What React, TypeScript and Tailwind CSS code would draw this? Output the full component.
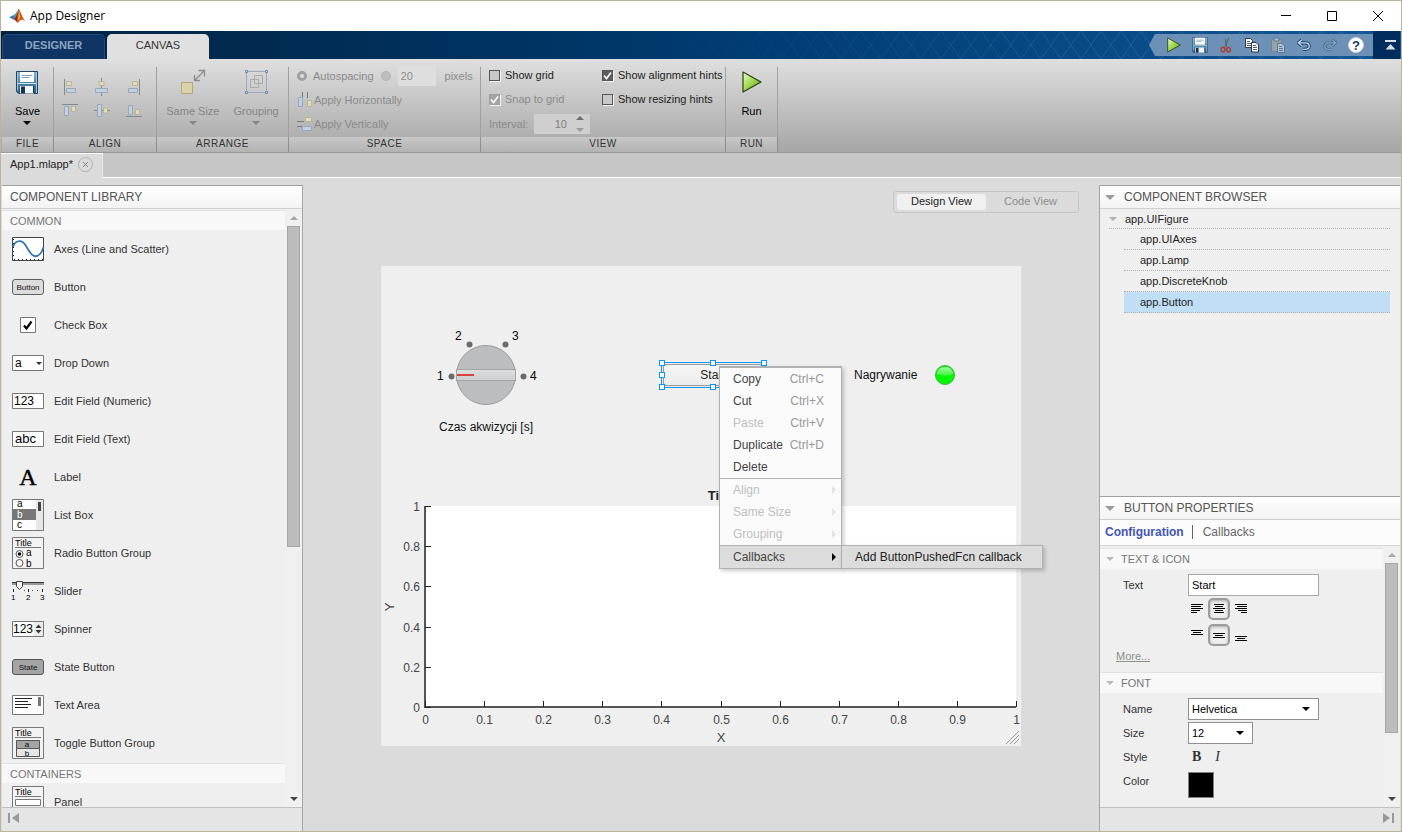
import type { ReactNode } from "react";
import { useState } from "react";
import clsx from "clsx";

type IconProps = { className?: string };

const SANS = "font-['Liberation_Sans',Arial,sans-serif]";

/* ---------- shared bits ---------- */

function Triangle({ dir = "down", className }: { dir?: "down" | "up" | "right"; className?: string }) {
  const points = {
    down: "0,0 10,0 5,5",
    up: "0,5 10,5 5,0",
    right: "0,0 5,5 0,10",
  }[dir];
  return (
    <svg viewBox={dir === "right" ? "0 0 5 10" : "0 0 10 5"} className={clsx("shrink-0", className)} aria-hidden="true">
      <polygon points={points} fill="currentColor" />
    </svg>
  );
}

function MatlabLogo() {
  return (
    <svg viewBox="0 0 16 16" className="h-4 w-4" aria-hidden="true">
      <path d="M0 9.2 4.5 7 6.6 8.7 4.2 11.6z" fill="#3f7fb5" />
      <path d="M4.5 7C6.5 6.6 8 3 9.8 1L6.9 8.7z" fill="#2aa5b8" />
      <path d="M4.2 11.6 6.6 8.7C8 6.5 9 3 9.8 1c.8 1 1.2 3 1.8 5.5L8.2 14.5C7 13.4 6 11 4.2 11.6z" fill="#8f2a1e" />
      <path d="M9.8 1C11.6 3.4 13 9 16 12.8c-2-1-3.3-1.6-4.6-.6-1.2.8-1.8 2-3.2 2.9C8.6 12 8 6 9.8 1z" fill="#d4551c" />
      <path d="M9.8 1c.2 4-.2 8-1.2 12 1-1 2-2.6 2.6-4z" fill="#f7b64a" />
    </svg>
  );
}

function ScrollColumn({ children }: { children: ReactNode }) {
  return (
    <div className="flex w-[17px] shrink-0 flex-col items-center bg-[#f0f0f0] pb-[6px]" aria-hidden="true">
      <div className="flex h-[17px] shrink-0 items-center">
        <Triangle dir="up" className="h-1 w-2 text-[#a6a6a6]" />
      </div>
      {children}
      <div className="flex-1" />
      <Triangle className="h-1 w-2 text-[#444]" />
    </div>
  );
}

/* ---------- title bar and tab header ---------- */

function TitleBar() {
  return (
    <div className="flex h-[30px] shrink-0 items-center bg-white pl-2">
      <MatlabLogo />
      <h1 className="ml-[5px] flex-1 font-['Open_Sans','Noto_Sans',sans-serif] text-xs text-black">App Designer</h1>
      <button type="button" aria-label="Minimize" className="flex h-full w-[46px] items-center justify-center">
        <svg viewBox="0 0 10 10" className="h-[10px] w-[10px]">
          <path d="M0 4.5h10" stroke="#000" />
        </svg>
      </button>
      <button type="button" aria-label="Maximize" className="flex h-full w-[46px] items-center justify-center">
        <svg viewBox="0 0 10 10" className="h-[10px] w-[10px]">
          <path d="M.5.5h9v9h-9z" stroke="#000" fill="none" />
        </svg>
      </button>
      <button type="button" aria-label="Close" className="flex h-full w-[46px] items-center justify-center">
        <svg viewBox="0 0 10 10" className="h-[10px] w-[10px]">
          <path d="M0 0 10 10M10 0 0 10" stroke="#000" />
        </svg>
      </button>
    </div>
  );
}

function RunIcon({ className }: IconProps) {
  return (
    <svg viewBox="0 0 20 22" className={className} aria-hidden="true">
      <defs>
        <linearGradient id="runFill" x1="0" y1="0" x2="1" y2="1">
          <stop offset="0" stopColor="#f0fbd8" />
          <stop offset=".45" stopColor="#a5db55" />
          <stop offset="1" stopColor="#5c9c1c" />
        </linearGradient>
      </defs>
      <path d="M1 1 19 11 1 21z" fill="url(#runFill)" stroke="#26420e" strokeWidth="1.2" strokeLinejoin="round" />
    </svg>
  );
}

function FloppyIcon({ className }: IconProps) {
  return (
    <svg viewBox="0 0 22 23" className={className} aria-hidden="true">
      <defs>
        <linearGradient id="floppyBody" x1="0" y1="0" x2="0" y2="1">
          <stop offset="0" stopColor="#7fb0cf" />
          <stop offset="1" stopColor="#245b82" />
        </linearGradient>
      </defs>
      <path d="M.5.5h21v22H2.5l-2-2z" fill="url(#floppyBody)" stroke="#1d4766" />
      <path d="M1.5 1v18.5M20.5 1v21" stroke="#9cc8e2" />
      <path d="M4 1h14v10H4z" fill="#fff" />
      <path d="M5.5 4.5h11M5.5 6.5h8" stroke="#7a9fb8" />
      <path d="M2 12.5h18" stroke="#cfe4f0" />
      <path d="M4 15h14v7.500H4z" fill="#f1f4f6" />
      <path d="M5 15.5h4v7H5z" fill="#17344b" />
      <path d="M17.5 15v7" stroke="#17344b" />
    </svg>
  );
}

function CutIcon({ className }: IconProps) {
  return (
    <svg viewBox="0 0 16 16" className={className} fill="none" aria-hidden="true">
      <path d="M11 .5 7 9.5M7.5 2l1 8" stroke="#5d6a78" strokeWidth="1.4" />
      <ellipse cx="5" cy="12.5" rx="1.8" ry="2.4" stroke="#b03a2c" strokeWidth="1.4" />
      <ellipse cx="10.5" cy="12.7" rx="1.8" ry="2.3" stroke="#b03a2c" strokeWidth="1.4" />
    </svg>
  );
}

function CopyIcon({ className }: IconProps) {
  return (
    <svg viewBox="0 0 16 16" className={className} aria-hidden="true">
      <path d="M1.5 1.5h5l2 2v7h-7z" fill="#fff" stroke="#26394d" />
      <path d="M3 4.5h3M3 6.5h4M3 8.5h4" stroke="#4c6177" />
      <path d="M7.5 5.5h4.5l2.5 2.5v7h-7z" fill="#fff" stroke="#26394d" />
      <path d="M9 8.5h3M9 10.5h4M9 12.5h4" stroke="#4c6177" />
    </svg>
  );
}

function PasteIcon({ className }: IconProps) {
  return (
    <svg viewBox="0 0 16 16" className={clsx("opacity-60", className)} aria-hidden="true">
      <path d="M1.5 2.5h10v12h-10z" fill="#b3b29a" stroke="#6f7d88" />
      <path d="M4 1h5v3H4z" fill="#d5dbe0" stroke="#566878" />
      <path d="M7.5 6.5h4.5l2.5 2.5v6.5h-7z" fill="#dfe7ee" stroke="#4f6a84" />
      <path d="M9 9.5h3M9 11.5h4M9 13.5h4" stroke="#4f6a84" />
    </svg>
  );
}

function UndoIcon({ className }: IconProps) {
  return (
    <svg viewBox="0 0 16 16" className={className} fill="none" strokeLinejoin="round" aria-hidden="true">
      <path d="M5.5 2 1.5 5.5l4 3.5M2 5.5h7.5c6 0 6 7.5 0 7.5H7" stroke="#1b3f66" strokeWidth="3.6" />
      <path d="M5.5 2 1.5 5.5l4 3.5M2 5.5h7.5c6 0 6 7.5 0 7.5H7" stroke="#c4dcf2" strokeWidth="1.5" />
    </svg>
  );
}

function RedoIcon({ className }: IconProps) {
  return (
    <svg viewBox="0 0 16 16" className={className} fill="none" strokeLinejoin="round" aria-hidden="true">
      <path d="M10.5 2l4 3.5-4 3.5M14 5.5H6.5c-6 0-6 7.5 0 7.5H9" stroke="#456789" strokeWidth="3.2" />
      <path d="M10.5 2l4 3.5-4 3.5M14 5.5H6.5c-6 0-6 7.5 0 7.5H9" stroke="#86a5c4" strokeWidth="1.4" />
    </svg>
  );
}

function HelpIcon({ className }: IconProps) {
  return (
    <svg viewBox="0 0 16 16" className={className} aria-hidden="true">
      <circle cx="8" cy="8" r="7.5" fill="#fff" stroke="#c9d3dd" />
      <text x="8" y="12.5" textAnchor="middle" fontSize="13" fontWeight="700" fill="#1d3a5c" fontFamily="Liberation Sans">
        ?
      </text>
    </svg>
  );
}

const quickActions = [
  { name: "Run", icon: <RunIcon className="h-4 w-[14px]" /> },
  { name: "Save", icon: <FloppyIcon className="h-4 w-4" /> },
  { name: "Cut", icon: <CutIcon className="h-4 w-4" /> },
  { name: "Copy", icon: <CopyIcon className="h-4 w-4" /> },
  { name: "Paste", icon: <PasteIcon className="h-4 w-4" /> },
  { name: "Undo", icon: <UndoIcon className="h-[14px] w-[14px]" /> },
  { name: "Redo", icon: <RedoIcon className="h-[14px] w-[14px]" /> },
  { name: "Help", icon: <HelpIcon className="h-4 w-4" /> },
];

function HeaderTabs() {
  return (
    <div className="relative flex h-7 shrink-0 items-end bg-linear-to-r from-[#00223f] via-[#003a70] via-50% to-[#125796] px-px">
      <svg className="absolute inset-y-0 right-0 h-full w-3/5" aria-hidden="true">
        <defs>
          <pattern id="mesh" width="20" height="28" patternUnits="userSpaceOnUse">
            <path d="M0 0 20 28M20 0 0 28" stroke="#4a8fc4" strokeOpacity=".3" fill="none" />
          </pattern>
          <linearGradient id="meshFade">
            <stop offset=".1" stopColor="#000" />
            <stop offset=".7" stopColor="#fff" />
          </linearGradient>
          <mask id="meshMask">
            <rect width="100%" height="100%" fill="url(#meshFade)" />
          </mask>
        </defs>
        <rect width="100%" height="100%" fill="url(#mesh)" mask="url(#meshMask)" />
      </svg>
      <button
        type="button"
        className="relative h-[25px] w-[103px] rounded-t-[5px] border border-b-0 border-[#1c4a80] bg-[#0e3564] pb-[3px] text-[11px] font-bold text-[#8fa5c0]"
      >
        DESIGNER
      </button>
      <button
        type="button"
        className="relative ml-[2px] h-[25px] w-[102px] rounded-t-[5px] bg-[#e0e0e0] pb-[3px] text-[11px] text-[#333]"
      >
        CANVAS
      </button>
      <div className="flex-1" />
      <div className="relative flex h-full items-center">
        <svg viewBox="0 0 8 22" className="h-[22px] w-2" aria-hidden="true">
          <path d="M8 0H6L0 11l6 11h2z" fill="#6d90b6" />
        </svg>
        <div className="flex h-[22px] items-center bg-[#6d90b6] px-1">
          {quickActions.map((action) => (
            <button key={action.name} type="button" aria-label={action.name} className="flex w-[26px] justify-center">
              {action.icon}
            </button>
          ))}
        </div>
        <button type="button" aria-label="Minimize toolstrip" className="flex h-full w-[27px] items-center justify-center bg-[#002d5c] pl-2">
          <svg viewBox="0 0 11 10" className="h-[10px] w-[11px]">
            <path d="M0 .5h11M0 1.5h11" stroke="#d5e0ea" />
            <path d="M5.5 4 10.5 9.5H.5z" fill="#d5e0ea" />
          </svg>
        </button>
      </div>
    </div>
  );
}

/* ---------- ribbon ---------- */

function RibbonSection({ title, className, children }: { title: string; className?: string; children: ReactNode }) {
  return (
    <section className={clsx("flex flex-col", className)}>
      <div className="flex min-h-0 flex-1">
        <div className="flex min-w-0 flex-1">{children}</div>
        <div className="mt-2 w-px bg-[#a0a0a0]" />
      </div>
      <h2 className="flex h-[15px] items-center justify-center border-r border-[#8e8e8e] bg-linear-to-b from-[#c8c8c8] to-[#b2b2b2] pb-px text-[10px] leading-[14px] tracking-wider text-[#333]">
        {title}
      </h2>
    </section>
  );
}

function RibbonButton({
  label,
  icon,
  disabled,
  arrow,
}: {
  label: string;
  icon: ReactNode;
  disabled?: boolean;
  arrow?: boolean;
}) {
  return (
    <button
      type="button"
      disabled={disabled}
      className={clsx("flex flex-col items-center px-1 pt-[10px] text-[11px]", disabled ? "text-[#858585]" : "text-black")}
    >
      <span className="flex h-[26px] items-center justify-center">{icon}</span>
      <span className="mt-2 leading-4">{label}</span>
      {arrow && <Triangle className="mt-[2px] h-1 w-2" />}
    </button>
  );
}

const B = "#94a8bf";
const Y = "#bcb48e";

const alignIcons = [
  {
    name: "Align left",
    art: (
      <>
        <path d="M2.5 1v16" stroke="#7f8a90" />
        <path d="M4.5 3.5h5v4h-5z" stroke={Y} fill="#e0dcc4" />
        <path d="M4.5 10.5h9v4h-9z" stroke={B} fill="#c6d0dc" />
      </>
    ),
  },
  {
    name: "Align center",
    art: (
      <>
        <path d="M7.5 0v18" stroke="#7f8a90" />
        <path d="M5 3.5h5v4H5z" stroke={Y} fill="#e0dcc4" />
        <path d="M1.5 10.5h12v4h-12z" stroke={B} fill="#c6d0dc" />
      </>
    ),
  },
  {
    name: "Align right",
    art: (
      <>
        <path d="M13.5 1v16" stroke="#7f8a90" />
        <path d="M6.5 3.5h5v4h-5z" stroke={Y} fill="#e0dcc4" />
        <path d="M2.5 10.5h9v4h-9z" stroke={B} fill="#c6d0dc" />
      </>
    ),
  },
  {
    name: "Align top",
    art: (
      <>
        <path d="M0 2.5h16" stroke="#7f8a90" />
        <path d="M2.5 4.5h4v9h-4z" stroke={B} fill="#c6d0dc" />
        <path d="M9.5 4.5h4v5h-4z" stroke={Y} fill="#e0dcc4" />
      </>
    ),
  },
  {
    name: "Align middle",
    art: (
      <>
        <path d="M0 8.5h16" stroke="#7f8a90" />
        <path d="M3.5 2.5h4v12h-4z" stroke={B} fill="#c6d0dc" />
        <path d="M9.5 6h4v5h-4z" stroke={Y} fill="#e0dcc4" />
      </>
    ),
  },
  {
    name: "Align bottom",
    art: (
      <>
        <path d="M0 14.5h16" stroke="#7f8a90" />
        <path d="M2.5 3.5h4v9h-4z" stroke={B} fill="#c6d0dc" />
        <path d="M9.5 7.5h4v5h-4z" stroke={Y} fill="#e0dcc4" />
      </>
    ),
  },
];

function CheckField({ id, label, checked, disabled }: { id: string; label: string; checked?: boolean; disabled?: boolean }) {
  return (
    <div className={clsx("flex h-6 items-center gap-[5px]", disabled ? "text-[#8a8a8a]" : "text-[#1c1c1c]")}>
      <span className="relative flex">
        <input
          id={id}
          type="checkbox"
          defaultChecked={checked}
          disabled={disabled}
          className="peer h-[11px] w-[11px] appearance-none border border-[#555] bg-[#c9c9c9] shadow-[1px_1px_0_#f4f4f4] checked:bg-[#5c5c5c] disabled:border-[#a0a0a0] disabled:bg-[#a4a4a4]"
        />
        <svg viewBox="0 0 11 11" className="pointer-events-none absolute inset-0 hidden h-[11px] w-[11px] peer-checked:block">
          <path d="M2 5.5 4.5 8.5 9 2.5" stroke="#f4f4f4" strokeWidth="1.8" fill="none" />
        </svg>
      </span>
      <label htmlFor={id}>{label}</label>
    </div>
  );
}

function Ribbon() {
  return (
    <div className="flex h-[94px] shrink-0 border-b border-[#9a9a9a] bg-linear-to-b from-[#dfdfdf] to-[#a6a6a6] pl-px text-[11px]">
      <RibbonSection title="FILE" className="w-[52px]">
        <div className="flex flex-1 justify-center">
          <RibbonButton label="Save" icon={<FloppyIcon className="h-[23px] w-[22px]" />} arrow />
        </div>
      </RibbonSection>

      <RibbonSection title="ALIGN" className="w-[103px]">
        <div className="mt-[19px] grid flex-1 auto-rows-[24px] grid-cols-3 content-start pr-[6px]">
          {alignIcons.map((icon) => (
            <button key={icon.name} type="button" disabled aria-label={icon.name} className="flex h-[18px] justify-center">
              <svg viewBox="0 0 16 18" className="h-[18px] w-4" fill="none">
                {icon.art}
              </svg>
            </button>
          ))}
        </div>
      </RibbonSection>

      <RibbonSection title="ARRANGE" className="w-[132px]">
        <div className="flex flex-1 justify-center gap-[6px]">
          <RibbonButton
            label="Same Size"
            disabled
            arrow
            icon={
              <svg viewBox="0 0 26 26" className="h-[26px] w-[26px]" fill="none">
                <path d="M1.5 13.5h11v11h-11z" fill="#d9d3ac" stroke="#b0a878" />
                <path d="M14.5 11.5 24 2M18.5 1.5h6v6M14.5 6v5.5H20" stroke="#8c8c8c" strokeWidth="1.3" />
              </svg>
            }
          />
          <RibbonButton
            label="Grouping"
            disabled
            arrow
            icon={
              <svg viewBox="0 0 26 26" className="h-[26px] w-[26px]" fill="none">
                <path d="M3.5 2.5h20v21h-20z" stroke="#9aa9bc" />
                <path d="M11.5 6.5h8v8h-8zM7.5 10.5h8v8h-8z" stroke="#aaa" />
                <path d="M2.5 1.5h2v2h-2zM22.5 1.5h2v2h-2zM2.5 22.5h2v2h-2zM22.5 22.5h2v2h-2z" fill="#d6dce4" stroke="#7088a8" />
              </svg>
            }
          />
        </div>
      </RibbonSection>

      <RibbonSection title="SPACE" className="w-[192px]">
        <div className="flex flex-1 flex-col pt-[5px] pl-2 text-[#8a8a8a]">
          <div className="flex h-6 items-center">
            <input
              id="autospacing"
              type="radio"
              name="spacing"
              defaultChecked
              disabled
              className="mr-[6px] h-[10px] w-[10px] appearance-none rounded-full border-[3px] border-[#a0a0a0] bg-[#e0e0e0]"
            />
            <label htmlFor="autospacing">Autospacing</label>
            <input
              id="fixed"
              type="radio"
              name="spacing"
              aria-label="Fixed spacing"
              disabled
              className="mx-[7px] h-[10px] w-[10px] appearance-none rounded-full border border-[#b4b4b4] bg-[#bdbdbd]"
            />
            <input
              aria-label="Spacing in pixels"
              defaultValue="20"
              disabled
              className="h-5 w-[38px] bg-[#dedede] px-[3px] text-[11px] text-[#8a8a8a]"
            />
            <span className="ml-[9px]">pixels</span>
          </div>
          <button type="button" disabled className="flex h-6 items-center gap-[2px]">
            <svg viewBox="0 0 15 16" className="h-4 w-[15px]" fill="none">
              <path d="M5.5 0v5M10.5 0v6" stroke="#777" />
              <path d="M1.5 5.5h4v9h-4z" stroke={B} fill="#c6d0dc" />
              <path d="M10.5 8.5h4v6h-4z" stroke={Y} fill="#e0dcc4" />
            </svg>
            Apply Horizontally
          </button>
          <button type="button" disabled className="flex h-6 items-center gap-[2px]">
            <svg viewBox="0 0 15 16" className="h-4 w-[15px]" fill="none">
              <path d="M0 5.5h7M0 10.5h5" stroke="#777" />
              <path d="M8.5 1.5h6v4h-6z" stroke={Y} fill="#e0dcc4" />
              <path d="M5.5 10.5h9v4h-9z" stroke={B} fill="#c6d0dc" />
            </svg>
            Apply Vertically
          </button>
        </div>
      </RibbonSection>

      <RibbonSection title="VIEW" className="w-[245px]">
        <div className="flex flex-1 gap-3 pt-1 pl-2">
          <div className="flex flex-col">
            <CheckField id="show-grid" label="Show grid" />
            <CheckField id="snap-grid" label="Snap to grid" checked disabled />
            <div className="flex h-[26px] items-center text-[#8a8a8a]">
              <label htmlFor="interval" className="w-[45px]">
                Interval:
              </label>
              <div className="flex h-5 w-14 items-center bg-[#cfcfcf] pr-[6px]">
                <input
                  id="interval"
                  defaultValue="10"
                  disabled
                  className="w-full min-w-0 flex-1 pr-[9px] text-right text-[11px] text-[#7d7d7d]"
                />
                <div className="flex flex-col gap-2">
                  <Triangle dir="up" className="h-1 w-2 text-[#6e6e6e]" />
                  <Triangle className="h-1 w-2 text-[#9c9c9c]" />
                </div>
              </div>
            </div>
          </div>
          <div className="flex flex-col">
            <CheckField id="alignment-hints" label="Show alignment hints" checked />
            <CheckField id="resizing-hints" label="Show resizing hints" />
          </div>
        </div>
      </RibbonSection>

      <RibbonSection title="RUN" className="w-[52px]">
        <div className="flex flex-1 justify-center">
          <RibbonButton label="Run" icon={<RunIcon className="h-[22px] w-5" />} />
        </div>
      </RibbonSection>
    </div>
  );
}

function FileTabs() {
  return (
    <div className="flex h-[25px] shrink-0">
      <div className="flex w-[102px] items-center border-t border-r border-t-white border-r-[#e9e9e9] bg-[#dbdbdb] pb-[3px] pl-[9px] text-[11px] text-[#222]">
        <span className="flex-1">App1.mlapp*</span>
        <button type="button" aria-label="Close App1.mlapp" className="mr-[9px]">
          <svg viewBox="0 0 15 15" className="h-[15px] w-[15px]" fill="none">
            <circle cx="7.5" cy="7.5" r="7" stroke="#b0b0b0" />
            <path d="M5 5l5 5M10 5l-5 5" stroke="#808080" />
          </svg>
        </button>
      </div>
      <div className="flex-1 border-b border-white bg-[#c6c6c6]" />
    </div>
  );
}

/* ---------- component library ---------- */

const T = { fontFamily: "Liberation Sans, Arial, sans-serif" };

function TitledFrame({ children }: { children: ReactNode }) {
  return (
    <>
      <path d="M.5.5h31v31H.5z" fill="#f3f3f3" stroke="#777" />
      <text x="3" y="9" fontSize="9" style={T}>
        Title
      </text>
      <path d="M3 10.5h26" stroke="#777" />
      {children}
    </>
  );
}

const libraryItems: { name: string; art: ReactNode }[] = [
  {
    name: "Axes (Line and Scatter)",
    art: (
      <>
        <path d="M.5 4.5h31v23H.5z" fill="#fff" stroke="#444" />
        <path d="M1.5 6v20M2 26.5h29" stroke="#222" strokeDasharray="1 3" />
        <path d="M1 14C3 7 10 6 14 13S22 27 28 21c2-2 3-5 3.5-7" fill="none" stroke="#2b74b5" strokeWidth="1.7" />
      </>
    ),
  },
  {
    name: "Button",
    art: (
      <>
        <rect x=".5" y="8.5" width="31" height="15" rx="2.5" fill="#dcdcdc" stroke="#5f5f5f" />
        <text x="16" y="19" fontSize="8" textAnchor="middle" fill="#111" style={T}>
          Button
        </text>
      </>
    ),
  },
  {
    name: "Check Box",
    art: (
      <>
        <path d="M8.5 8.5h15v15h-15z" fill="#fff" stroke="#777" />
        <path d="M12 16.5l2.5 3 5-7" fill="none" stroke="#000" strokeWidth="2.2" />
      </>
    ),
  },
  {
    name: "Drop Down",
    art: (
      <>
        <path d="M.5 8.5h31v15H.5z" fill="#fff" stroke="#777" />
        <text x="3" y="20" fontSize="12" style={T}>
          a
        </text>
        <path d="M24 15h6l-3 3z" fill="#333" />
      </>
    ),
  },
  {
    name: "Edit Field (Numeric)",
    art: (
      <>
        <path d="M.5 8.5h31v15H.5z" fill="#fff" stroke="#777" />
        <text x="2" y="20" fontSize="12" style={T}>
          123
        </text>
      </>
    ),
  },
  {
    name: "Edit Field (Text)",
    art: (
      <>
        <path d="M.5 8.5h31v15H.5z" fill="#fff" stroke="#777" />
        <text x="3" y="20" fontSize="13" style={T}>
          abc
        </text>
      </>
    ),
  },
  {
    name: "Label",
    art: (
      <text x="16" y="24" fontSize="24" textAnchor="middle" stroke="#000" strokeWidth=".4" style={{ fontFamily: "Liberation Serif, serif" }}>
        A
      </text>
    ),
  },
  {
    name: "List Box",
    art: (
      <>
        <path d="M.5.5h31v31H.5z" fill="#fff" stroke="#777" />
        <path d="M24 1h7v30h-7z" fill="#e6e8e8" />
        <path d="M26 3h3v9h-3z" fill="#444" />
        <path d="M1 10h23v11H1z" fill="#777" />
        <g fontSize="10" style={T}>
          <text x="5" y="8">a</text>
          <text x="5" y="19" fill="#fff">
            b
          </text>
          <text x="5" y="29">c</text>
        </g>
      </>
    ),
  },
  {
    name: "Radio Button Group",
    art: (
      <TitledFrame>
        <circle cx="7.5" cy="17" r="3.5" fill="#fff" stroke="#555" />
        <circle cx="7.5" cy="17" r="1.8" />
        <circle cx="7.5" cy="26" r="3.5" fill="#fff" stroke="#555" />
        <g fontSize="10" style={T}>
          <text x="14" y="19">a</text>
          <text x="14" y="30">b</text>
        </g>
      </TitledFrame>
    ),
  },
  {
    name: "Slider",
    art: (
      <>
        <path d="M0 7.5h32" stroke="#333" />
        <path d="M0 9h32" stroke="#999" strokeWidth="2" />
        <path d="M4.5 6.5h6v5l-3 3-3-3z" fill="#f3f3f3" stroke="#444" />
        <path d="M1.5 14v3M16.5 14v3M30.5 14v3" stroke="#222" />
        <path d="M12.5 15v1M20.5 15v1M25.5 15v1" stroke="#555" />
        <g fontSize="8" style={T}>
          <text x="-1" y="25">1</text>
          <text x="14" y="25">2</text>
          <text x="28" y="25">3</text>
        </g>
      </>
    ),
  },
  {
    name: "Spinner",
    art: (
      <>
        <path d="M.5 8.5h31v15H.5z" fill="#fff" stroke="#777" />
        <path d="M22 9h9v14h-9z" fill="#ececec" />
        <text x="1" y="20" fontSize="12" style={T}>
          123
        </text>
        <path d="M23.5 15h6l-3-3.5zM23.5 17h6l-3 3.5z" fill="#333" />
      </>
    ),
  },
  {
    name: "State Button",
    art: (
      <>
        <rect x=".5" y="8.5" width="31" height="15" rx="2.5" fill="#a4a4a4" stroke="#555" />
        <text x="16" y="19" fontSize="8" textAnchor="middle" fill="#111" style={T}>
          State
        </text>
      </>
    ),
  },
  {
    name: "Text Area",
    art: (
      <>
        <path d="M.5 6.5h31v19H.5z" fill="#fff" stroke="#777" />
        <path d="M3 9.5h17M3 12.5h13M3 15.5h16M3 18.5h13" stroke="#222" />
        <path d="M26 8h3v9h-3z" fill="#777" />
      </>
    ),
  },
  {
    name: "Toggle Button Group",
    art: (
      <TitledFrame>
        <path d="M4.5 13.5h23v8h-23z" fill="#a4a4a4" stroke="#555" />
        <path d="M4.5 21.5h23v8h-23z" fill="#e6e6e6" stroke="#555" />
        <g fontSize="8" textAnchor="middle" style={T}>
          <text x="15" y="20">a</text>
          <text x="15" y="29">b</text>
        </g>
      </TitledFrame>
    ),
  },
];

const containerItems: { name: string; art: ReactNode }[] = [
  {
    name: "Panel",
    art: (
      <TitledFrame>
        <path d="M3.5 13.5h25v6h-25z" fill="#fff" stroke="#777" />
      </TitledFrame>
    ),
  },
];

function LibraryGroup({ title, items }: { title: string; items: { name: string; art: ReactNode }[] }) {
  return (
    <section className="pt-px">
      <h3 className="flex h-5 items-center border-t border-[#e2e2e2] bg-[#f8f8f8] pt-[2px] pl-2 text-[11px] text-[#777]">
        {title}
      </h3>
      <ul>
        {items.map((item) => (
          <li key={item.name} className="flex h-[38px] items-center gap-[10px] pl-[10px] text-[11px] text-[#333]">
            <svg viewBox="0 0 32 32" className="h-8 w-8 shrink-0 overflow-visible" aria-hidden="true">
              {item.art}
            </svg>
            {item.name}
          </li>
        ))}
      </ul>
    </section>
  );
}

function PanelHeader({ title, collapsible }: { title: string; collapsible?: boolean }) {
  return (
    <h2
      className={clsx(
        "flex h-6 shrink-0 items-center border-t border-b border-t-[#a0a0a0] border-b-[#d0d0d0] bg-linear-to-b from-white to-[#f3f3f3] text-xs text-[#555]",
        collapsible ? "pl-[5px]" : "pl-2",
      )}
    >
      {collapsible && <Triangle className="mr-[9px] h-[5px] w-[10px] text-[#9c9c9c]" />}
      {title}
    </h2>
  );
}

function ComponentLibrary() {
  return (
    <aside className="flex w-[301px] shrink-0 flex-col border-r border-[#a6a6a6] bg-[#efefef]">
      <PanelHeader title="COMPONENT LIBRARY" />
      <div className="flex min-h-0 flex-1">
        <div className="h-full flex-1 overflow-hidden">
          <LibraryGroup title="COMMON" items={libraryItems} />
          <LibraryGroup title="CONTAINERS" items={containerItems} />
        </div>
        <ScrollColumn>
          <div className="h-[321px] w-[13px] border border-[#a6a6a6] bg-[#bcbcbc]" />
        </ScrollColumn>
      </div>
      <div className="flex h-6 shrink-0 items-center border-t border-[#c0c0c0] bg-[#e5e5e5] pb-1 pl-[6px]">
        <button type="button" aria-label="Collapse component library">
          <svg viewBox="0 0 11 10" className="h-[10px] w-[11px]" fill="#999">
            <path d="M0 0h2v10H0zM11 0v10L4 5z" />
          </svg>
        </button>
      </div>
    </aside>
  );
}

/* ---------- design canvas ---------- */

const xTicks = ["0", "0.1", "0.2", "0.3", "0.4", "0.5", "0.6", "0.7", "0.8", "0.9", "1"];
const yTicks = ["0", "0.2", "0.4", "0.6", "0.8", "1"];

function AxesPlot() {
  const left = 44;
  const right = 635;
  const top = 25;
  const bottom = 226;
  return (
    <svg viewBox="0 0 640 265" className="absolute bottom-0 left-0 h-[265px] w-[640px]" fill="#444" fontSize="12">
      <rect x={left} y={top} width={right - left} height={bottom - top} fill="#fff" />
      <path d={`M${left} ${top}V${bottom}H${right}`} fill="none" stroke="#555" strokeWidth="2" />
      {xTicks.map((tick, i) => {
        const x = Math.round(left + (i * (right - left)) / 10) + 0.5;
        return (
          <g key={tick}>
            <path d={`M${x} ${bottom}v-6`} stroke="#222" />
            <text x={x} y={bottom + 17} textAnchor="middle">
              {tick}
            </text>
          </g>
        );
      })}
      {yTicks.map((tick, i) => {
        const y = Math.round(bottom - (i * (bottom - top)) / 5) + 0.5;
        return (
          <g key={tick}>
            <path d={`M${left} ${y}h6`} stroke="#222" />
            <text x={39} y={y + 4} textAnchor="end">
              {tick}
            </text>
          </g>
        );
      })}
      <text x="340" y="19" textAnchor="middle" fontSize="13" fontWeight="700" fill="#222">
        Title
      </text>
      <text x="340" y="261" textAnchor="middle" fontSize="13">
        X
      </text>
      <text x="13" y="126" textAnchor="middle" fontSize="13" transform="rotate(-90 13 126)">
        Y
      </text>
      <path d="M625 263l13-13M629 263l9-9M633 263l5-5" stroke="#999" />
    </svg>
  );
}

function DiscreteKnob() {
  return (
    <svg viewBox="0 0 110 90" className="absolute top-[60px] left-[50px] h-[90px] w-[110px]" fontSize="12">
      <defs>
        <linearGradient id="knobBar" x1="0" y1="0" x2="0" y2="1">
          <stop offset="0" stopColor="#dedfe0" />
          <stop offset="1" stopColor="#cccdcf" />
        </linearGradient>
      </defs>
      <circle cx="55" cy="49" r="29.5" fill="#bcbdbf" stroke="#9c9c9e" />
      <rect x="25.5" y="43.5" width="59" height="11" fill="url(#knobBar)" stroke="#a2a3a5" />
      <path d="M26 49h17" stroke="#d9403f" strokeWidth="2" />
      <g fill="#6b6b6b">
        <circle cx="20.5" cy="50.5" r="3" />
        <circle cx="38.5" cy="18.5" r="3" />
        <circle cx="74.5" cy="18.5" r="3" />
        <circle cx="92.5" cy="50.5" r="3" />
      </g>
      <text x="6" y="54">1</text>
      <text x="24" y="14">2</text>
      <text x="81" y="14">3</text>
      <text x="99" y="54">4</text>
    </svg>
  );
}

const handle = "absolute h-[6px] w-[6px] border border-[#0a96ff] bg-white";

function StartButton() {
  return (
    <div className="absolute top-[96px] left-[280px] flex h-[26px] w-[104px] border border-[#0a96ff] p-px">
      <button
        type="button"
        className="flex-1 rounded-[3px] border border-[#999] bg-linear-to-b from-[#f6f6f6] to-[#ececec] text-xs leading-[18px] text-[#222]"
      >
        Start
      </button>
      <span className={clsx(handle, "-top-[3px] -left-[3px]")} />
      <span className={clsx(handle, "-top-[3px] left-12")} />
      <span className={clsx(handle, "-top-[3px] -right-[3px]")} />
      <span className={clsx(handle, "top-[9px] -left-[3px]")} />
      <span className={clsx(handle, "-bottom-[3px] -left-[3px]")} />
      <span className={clsx(handle, "-bottom-[3px] left-12")} />
    </div>
  );
}

type MenuRow = { label: string; keys?: string; disabled?: boolean; more?: boolean };

const editRows: MenuRow[] = [
  { label: "Copy", keys: "Ctrl+C" },
  { label: "Cut", keys: "Ctrl+X" },
  { label: "Paste", keys: "Ctrl+V", disabled: true },
  { label: "Duplicate", keys: "Ctrl+D" },
  { label: "Delete" },
];

const arrangeRows: MenuRow[] = [
  { label: "Align", disabled: true, more: true },
  { label: "Same Size", disabled: true, more: true },
  { label: "Grouping", disabled: true, more: true },
];

function MenuItem({ label, keys, disabled, more }: MenuRow) {
  return (
    <button
      type="button"
      role="menuitem"
      disabled={disabled}
      className={clsx("flex h-[22px] w-full items-center pl-[13px]", disabled ? "text-[#c0c0c0]" : "text-[#444]")}
    >
      <span className="flex-1 text-left">{label}</span>
      {keys && <span className="pr-[17px] text-[#999]">{keys}</span>}
      {more && <Triangle dir="right" className={clsx("mr-[5px] h-2 w-1", disabled ? "text-[#e2e2e2]" : "text-black")} />}
    </button>
  );
}

function ContextMenu() {
  return (
    <div className="absolute top-[100px] left-[338px] z-10 text-xs">
      <div role="menu" className="w-[123px] border border-t-2 border-[#b0b0b0] bg-[#fafafa] shadow-[2px_2px_4px_rgba(0,0,0,0.2)]">
        {editRows.map((row) => (
          <MenuItem key={row.label} {...row} />
        ))}
        <div className="border-t border-[#b0b0b0]">
          {arrangeRows.map((row) => (
            <MenuItem key={row.label} {...row} />
          ))}
        </div>
        <div className="border-t border-[#b0b0b0] bg-[#dcdcdc]">
          <MenuItem label="Callbacks" more />
        </div>
      </div>
      <div
        role="menu"
        className="absolute bottom-0 left-[122px] w-[202px] border border-[#b0b0b0] bg-[#dcdcdc] shadow-[2px_2px_4px_rgba(0,0,0,0.2)]"
      >
        <button type="button" role="menuitem" className="h-[22px] pl-[13px] whitespace-nowrap text-[#222]">
          Add ButtonPushedFcn callback
        </button>
      </div>
    </div>
  );
}

function DesignArea() {
  const [view, setView] = useState("Design View");
  return (
    <main className="flex min-w-0 flex-1 flex-col">
      <div className="mt-[6px] mr-5 flex h-[22px] w-[186px] items-center self-end rounded-[3px] border border-[#c6c6c6] px-[3px] pb-px text-[11px]">
        {["Design View", "Code View"].map((name) => (
          <button
            key={name}
            type="button"
            onClick={() => setView(name)}
            className={clsx(
              "h-4 flex-1 rounded-[3px] leading-[15px]",
              view === name ? "bg-[#f0f0f0] text-[#222]" : "text-[#8c8c8c]",
            )}
          >
            {name}
          </button>
        ))}
      </div>
      <div className="relative mx-auto mt-[53px] h-[480px] w-[640px] bg-[#efefef]">
        <AxesPlot />
        <DiscreteKnob />
        <span className="absolute top-[153px] left-[58px] text-xs text-[#111]">Czas akwizycji [s]</span>
        <StartButton />
        <span className="absolute top-[101px] left-[473px] text-xs text-[#111]">Nagrywanie</span>
        <svg viewBox="0 0 20 20" className="absolute top-[99px] left-[554px] h-5 w-5">
          <defs>
            <linearGradient id="lampShine" x1="0" y1="0" x2="0" y2="1">
              <stop offset="0" stopColor="#9dff9d" />
              <stop offset="1" stopColor="#43f043" />
            </linearGradient>
          </defs>
          <circle cx="10" cy="10" r="9.5" fill="#00f800" stroke="#4fae4f" />
          <path d="M2 9C2-.5 18-.5 18 9c-5 2-11 2-16 0z" fill="url(#lampShine)" />
        </svg>
        <ContextMenu />
      </div>
    </main>
  );
}

/* ---------- right column ---------- */

const components = ["app.UIAxes", "app.Lamp", "app.DiscreteKnob", "app.Button"];

function ComponentBrowser() {
  return (
    <section className="flex min-h-0 flex-1 flex-col">
      <PanelHeader title="COMPONENT BROWSER" collapsible />
      <div className="mr-[10px] ml-[9px] flex h-5 items-center border-b border-dotted border-[#b0b0b0] pt-px text-[11px] text-[#222]">
        <Triangle className="mr-2 h-1 w-2 text-[#b0b0b0]" />
        app.UIFigure
      </div>
      <ul className="mr-[10px] ml-6 text-[11px] text-[#222]">
        {components.map((name) => (
          <li
            key={name}
            className={clsx(
              "flex h-[21px] items-center border-b border-dotted border-[#b0b0b0] pl-4",
              name === "app.Button" && "bg-[#c0dff5]",
            )}
          >
            {name}
          </li>
        ))}
      </ul>
    </section>
  );
}

function PropertyGroup({ title, children }: { title: string; children: ReactNode }) {
  return (
    <section>
      <h3 className="flex h-[21px] items-center border-t border-[#e2e2e2] bg-[#f8f8f8] pl-[6px] text-[11px] text-[#777]">
        <Triangle className="mr-[7px] h-1 w-2 text-[#b8b8b8]" />
        {title}
      </h3>
      <div className="pl-[23px]">{children}</div>
    </section>
  );
}

function PropertyRow({ label, htmlFor, children }: { label: string; htmlFor?: string; children: ReactNode }) {
  return (
    <div className="flex h-6 items-center">
      <label htmlFor={htmlFor} className="w-[65px] shrink-0 text-[#333]">
        {label}
      </label>
      {children}
    </div>
  );
}

function IconToggle({ name, active, d }: { name: string; active?: boolean; d: string }) {
  return (
    <button
      type="button"
      aria-label={name}
      aria-pressed={!!active}
      className={clsx(
        "flex h-[22px] w-[22px] items-center justify-center rounded-[5px]",
        active && "border-2 border-[#9c9c9c] shadow-[inset_0_1px_3px_#aaa]",
      )}
    >
      <svg viewBox="0 0 12 12" className="h-3 w-3 shrink-0">
        <path d={d} stroke="#000" />
      </svg>
    </button>
  );
}

function ButtonProperties() {
  return (
    <section className="flex min-h-0 flex-1 flex-col">
      <PanelHeader title="BUTTON PROPERTIES" collapsible />
      <div className="flex h-[26px] shrink-0 items-center border-b border-[#d6d6d6] bg-[#fcfcfc] pb-[2px] pl-[5px] text-xs">
        <button type="button" className="font-bold text-[#4355b5]">
          Configuration
        </button>
        <span className="mr-[10px] ml-2 h-[14px] w-px bg-[#666]" />
        <button type="button" className="text-[#666]">
          Callbacks
        </button>
      </div>
      <div className="flex min-h-0 flex-1">
        <div className="flex-1 overflow-hidden pt-[2px] text-[11px]">
          <PropertyGroup title="TEXT & ICON">
            <div className="pt-1">
              <PropertyRow label="Text" htmlFor="text">
                <input id="text" defaultValue="Start" className="h-[22px] w-[131px] border border-[#a8a8a8] bg-white px-[3px] text-black" />
              </PropertyRow>
            </div>
            <div className="flex h-6 items-center pl-[63px]">
              <IconToggle name="Align left" d="M0 1.5h12M0 3.5h10M0 5.5h12M0 7.5h9M0 9.5h6" />
              <IconToggle name="Align center" active d="M1 1.5h10M2 3.5h8M0 5.5h12M2 7.5h8M1 9.5h10" />
              <IconToggle name="Align right" d="M0 1.5h12M2 3.5h10M0 5.5h12M3 7.5h9M6 9.5h6" />
            </div>
            <div className="mt-[2px] flex h-6 items-center pl-[63px]">
              <IconToggle name="Align top" d="M0 1.5h12M2 3.5h8M0 5.5h12" />
              <IconToggle name="Align middle" active d="M0 4.5h12M2 6.5h8M0 8.5h12" />
              <IconToggle name="Align bottom" d="M0 7.5h12M2 9.5h8M0 11.5h12" />
            </div>
            <div className="-ml-[7px] h-[25px] pt-px">
              <a href="#more" className="text-[#8a8f8a] underline">
                More...
              </a>
            </div>
          </PropertyGroup>
          <PropertyGroup title="FONT">
            <div className="pt-1">
              <PropertyRow label="Name" htmlFor="font-name">
                <span className="relative flex items-center">
                  <select id="font-name" className="h-[22px] w-[131px] appearance-none border border-[#8f8f8f] bg-white px-[3px] text-black">
                    <option>Helvetica</option>
                  </select>
                  <Triangle className="pointer-events-none absolute right-[9px] h-1 w-2 text-black" />
                </span>
              </PropertyRow>
              <PropertyRow label="Size" htmlFor="font-size">
                <span className="relative flex items-center">
                  <select id="font-size" className="h-[22px] w-[65px] appearance-none border border-[#8f8f8f] bg-white px-[3px] text-black">
                    <option>12</option>
                  </select>
                  <Triangle className="pointer-events-none absolute right-[9px] h-1 w-2 text-black" />
                </span>
              </PropertyRow>
              <PropertyRow label="Style">
                <span className="flex gap-[14px] pl-1 font-['Liberation_Serif',serif] text-sm text-[#333]">
                  <button type="button" className="font-bold">
                    B
                  </button>
                  <button type="button" className="italic">
                    I
                  </button>
                </span>
              </PropertyRow>
              <div className="flex pt-[3px]">
                <span className="w-[65px] pt-px text-[#333]">Color</span>
                <button type="button" aria-label="Font color" className="h-[26px] w-[26px] border border-[#808080] bg-black" />
              </div>
            </div>
          </PropertyGroup>
        </div>
        <ScrollColumn>
          <div className="h-[170px] w-[13px] border border-[#a6a6a6] bg-[#bcbcbc]" />
        </ScrollColumn>
      </div>
    </section>
  );
}

export default function App() {
  return (
    <div
      className={clsx(
        "flex h-screen flex-col overflow-hidden border border-[#bdb29c] bg-[#dbdbdb] antialiased select-none",
        SANS,
      )}
    >
      <TitleBar />
      <HeaderTabs />
      <Ribbon />
      <FileTabs />
      <div className="flex min-h-0 flex-1 px-px pt-[7px]">
        <ComponentLibrary />
        <DesignArea />
        <aside className="flex w-[301px] shrink-0 flex-col border-l border-[#a6a6a6] bg-[#efefef]">
          <ComponentBrowser />
          <ButtonProperties />
          <div className="flex h-6 shrink-0 items-center justify-end border-t border-[#c0c0c0] bg-[#e5e5e5] pr-[6px] pb-1">
            <button type="button" aria-label="Collapse properties">
              <svg viewBox="0 0 11 10" className="h-[10px] w-[11px]" fill="#999">
                <path d="M9 0h2v10H9zM0 0v10L7 5z" />
              </svg>
            </button>
          </div>
        </aside>
      </div>
    </div>
  );
}
